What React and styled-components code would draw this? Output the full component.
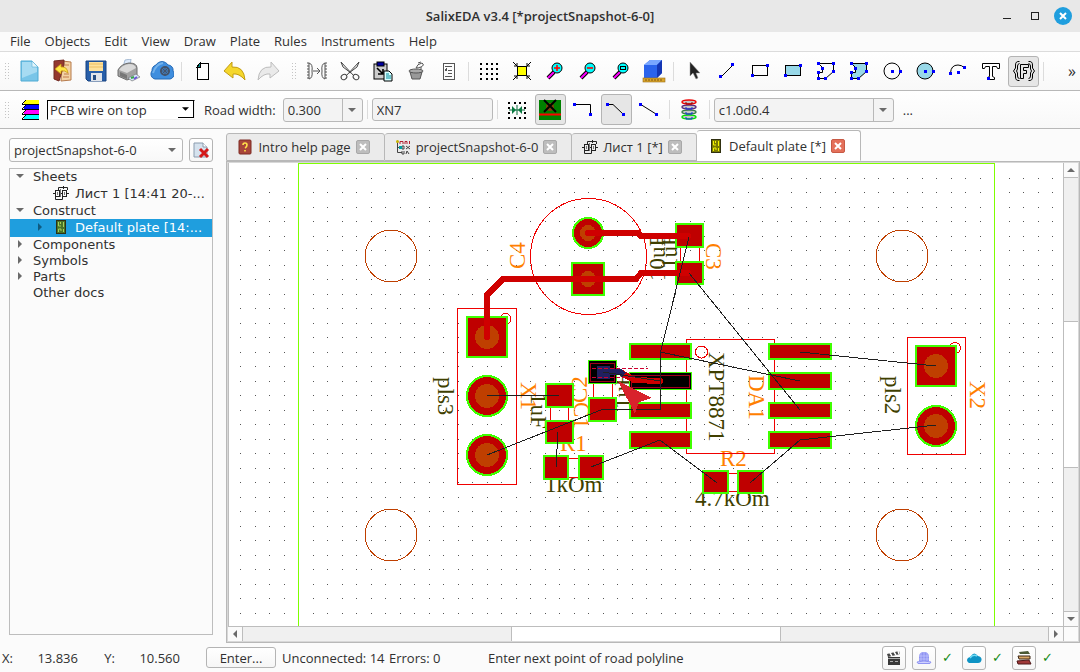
import React from "react";
import styled, { createGlobalStyle, css } from "styled-components";

const GlobalStyle = createGlobalStyle`
  * {
    box-sizing: border-box;
  }

  body {
    margin: 0;
    background: #fafafa;
  }

  body, button, input, select {
    font-family: "Open Sans", "Noto Sans", sans-serif;
    font-size: 13px;
    color: #303030;
  }
`;

const Window = styled.div`
  display: flex;
  flex-direction: column;
  height: 100vh;
  background: #fbfbfb;
`;

const TitleBar = styled.header`
  display: grid;
  grid-template-columns: 1fr auto 1fr;
  align-items: center;
  flex: none;
  height: 32px;
  padding: 0 8px;
  background: #e8e8e8;
`;

const Title = styled.h1`
  grid-column: 2;
  margin: 0;
  font-size: 13px;
  font-weight: 600;
`;

const WindowButtons = styled.div`
  display: flex;
  justify-content: flex-end;
  gap: 10px;
`;

const PlainButton = styled.button`
  display: flex;
  align-items: center;
  justify-content: center;
  padding: 0;
  border: none;
  background: none;
`;

const MenuBar = styled.nav`
  display: flex;
  flex: none;
  height: 20px;
  padding: 0 3px;
  border-bottom: 1px solid #dcdcdc;
`;

const MenuItem = styled.button`
  padding: 0 7px 1px;
  border: none;
  background: none;
  line-height: 18px;
`;

const ToolBar = styled.div`
  display: flex;
  align-items: center;
  gap: ${props => props.$gap}px;
  flex: none;
  height: ${props => props.$height}px;
  border-bottom: 1px solid #b8b8b8;
  background: linear-gradient(#ffffff, #f8f8f8);
`;

const ToolGroup = styled.div`
  display: flex;
  align-items: center;
  gap: 2px;
`;

const Handle = styled.span`
  width: 12px;
  height: 18px;
  background: radial-gradient(circle, #c4c4c4 1px, transparent 1px) 4px 0 / 3px 3px repeat-y,
    radial-gradient(circle, #c4c4c4 1px, transparent 1px) 7px 0 / 3px 3px repeat-y;
`;

const Separator = styled.span`
  width: 5px;
  height: 19px;
  background: linear-gradient(#dcdcdc, #dcdcdc) center / 1px 100% no-repeat;
`;

const ToolButton = styled.button`
  display: flex;
  align-items: center;
  justify-content: center;
  width: 31px;
  height: 31px;
  padding: 0;
  border: 1px solid transparent;
  border-radius: 3px;
  background: none;

  ${props =>
    props.$pressed &&
    css`
      border-color: #b4b4b4;
      background: #e6e6e6;
    `}
`;

const Icon = styled.svg`
  display: block;
  flex: none;
  width: ${props => props.$size || 24}px;
  height: ${props => props.$size || 24}px;
`;

const More = styled(PlainButton)`
  margin-left: auto;
  padding-right: 4px;
  font-size: 16px;
  line-height: 16px;
`;

const LayerIcon = styled.span`
  margin: 0 4px 0 7px;
`;

const ComboBox = styled.span`
  display: inline-grid;
  grid-template-columns: 1fr 20px;
  flex: ${props => (props.$grow ? "1" : "none")};
  width: ${props => props.$width}px;
  height: 24px;
  border: 1px solid #b8b8b8;
  border-radius: 3px;
  background: ${props => (props.$flat ? "linear-gradient(#ffffff, #f8f8f8)" : "#f3f3f3")};

  svg {
    grid-area: 1 / 2;
    align-self: center;
    justify-self: center;
    pointer-events: none;
  }
`;

const ComboSelect = styled.select`
  grid-area: 1 / 1 / 2 / 3;
  appearance: none;
  width: 100%;
  padding: 0 4px;
  border: none;
  background: ${props =>
    props.$flat ? "none" : "linear-gradient(#b8b8b8, #b8b8b8) right 19px top / 1px 100% no-repeat"};
`;

const SunkenCombo = styled(ComboBox)`
  grid-template-columns: 1fr 16px;
  height: 20px;
  border: 1px solid #f0f0f0;
  border-top-color: #000;
  border-left-color: #000;
  border-radius: 0;
  background: #fff;

  svg {
    width: 16px;
    height: 17px;
    border-right: 1px solid #000;
    border-bottom: 1px solid #000;
    align-self: start;
    padding: 4px;
  }

  select {
    padding: 0 2px;
    background: none;
  }
`;

const Label = styled.label`
  margin: 0 5px 0 7px;
`;

const TextInput = styled.input`
  width: 121px;
  height: 23px;
  padding: 0 4px;
  border: 1px solid #b8b8b8;
  border-radius: 3px;
  background: #f3f3f3;
`;

const Main = styled.div`
  display: flex;
  flex: 1;
  min-height: 0;
`;

const Sidebar = styled.aside`
  display: flex;
  flex-direction: column;
  gap: 6px;
  width: 226px;
  padding: 9px 13px 8px 9px;
`;

const SidebarTop = styled.div`
  display: flex;
  gap: 6px;
`;

const FramedButton = styled.button`
  display: flex;
  align-items: center;
  justify-content: center;
  width: ${props => props.$width || 24}px;
  height: ${props => props.$height || 24}px;
  padding: 0;
  border: 1px solid #b4b4b4;
  border-radius: 3px;
  background: linear-gradient(#ffffff, #f6f6f6);
`;

const Tree = styled.ul`
  flex: 1;
  margin: 0;
  padding: 0;
  border: 1px solid #bdbdbd;
  list-style: none;
  font-family: "DejaVu Sans", sans-serif;
`;

const TreeRow = styled.li`
  display: flex;
  align-items: center;
  height: ${props => (props.$level ? 18 : 16)}px;
  padding-bottom: 2px;
  padding-left: ${props => (props.$level ? 23 : 3)}px;
  color: ${props => (props.$selected ? "#fff" : "#303030")};
  background: ${props => (props.$selected ? "#1f9ede" : "none")};
  white-space: nowrap;
`;

const Expander = styled.span`
  display: flex;
  justify-content: center;
  width: 14px;
  margin-right: 6px;
`;

const TreeIcon = styled.span`
  margin-right: 6px;
`;

const Workspace = styled.main`
  display: flex;
  flex-direction: column;
  flex: 1;
  min-width: 0;
`;

const Tabs = styled.div`
  display: flex;
  align-items: flex-end;
  height: 32px;
`;

const Tab = styled.div`
  display: flex;
  align-items: center;
  justify-content: center;
  gap: 5px;
  width: ${props => props.$width}px;
  height: ${props => (props.$active ? 31 : 28)}px;
  padding-right: 4px;
  border: 1px solid #b8b8b8;
  border-left-width: ${props => (props.$first ? 1 : 0)}px;
  border-bottom-color: ${props => (props.$active ? "#fff" : "#b8b8b8")};
  border-radius: 3px 3px 0 0;
  background: ${props => (props.$active ? "#fff" : "#ebebeb")};
  white-space: nowrap;
`;

const CloseTab = styled.button`
  display: flex;
  align-items: center;
  justify-content: center;
  width: 14px;
  height: 14px;
  padding: 0;
  border: 1px solid ${props => (props.$active ? "#c85a45" : "#a8a8a8")};
  border-radius: 2px;
  background: ${props => (props.$active ? "#e4705a" : "#bdbdbd")};
`;

const ViewFrame = styled.div`
  display: grid;
  grid-template-columns: 1fr 15px;
  grid-template-rows: 1fr 15px;
  flex: 1;
  min-height: 0;
  border: 1px solid #b8b8b8;
  outline: 1px solid #d8d8d8;
  outline-offset: -2px;
  padding: 1px;
`;

const Canvas = styled.svg`
  display: block;
  width: 100%;
  height: 100%;
  min-height: 0;
  border-left: 1px solid #bdbdbd;
  background: #fff;
`;

const ScrollBar = styled.div`
  display: flex;
  flex-direction: ${props => (props.$vertical ? "column" : "row")};
  border: 0 solid #bdbdbd;
  border-width: ${props => (props.$vertical ? "0 0 0 1px" : "1px 0 0 0")};
  background: #f0f0f0;
`;

const ScrollButton = styled(PlainButton)`
  flex: none;
  width: ${props => (props.$vertical ? "auto" : "14px")};
  height: ${props => (props.$vertical ? "14px" : "auto")};
  background: #fafafa;
`;

const Track = styled.div`
  flex: ${props => props.$grow};
  background: ${props => (props.$thumb ? "#fff" : "#f0f0f0")};
  border: 0 solid #bdbdbd;
  border-width: ${props => (props.$thumb ? "0" : props.$vertical ? "1px 0" : "0 1px")};
`;

const Corner = styled.div`
  border: 0 solid #bdbdbd;
  border-width: 1px 0 0 1px;
`;

const StatusBar = styled.footer`
  display: flex;
  align-items: center;
  flex: none;
  height: 29px;
  padding: 0 24px 0 2px;
  white-space: nowrap;
`;

const StatusText = styled.span`
  width: ${props => props.$width}px;
  text-align: ${props => props.$align || "left"};
`;

const StatusTools = styled.div`
  display: flex;
  align-items: center;
  gap: 6px;
  margin-left: auto;
`;

const Check = styled.span`
  width: 14px;
  color: #168a16;
  font-family: "DejaVu Sans", sans-serif;
  font-size: 13px;
`;

const Arrow = ({ dir = "down", color = "#6a6a6a", size = 8 }) => {
  const points = {
    down: "0,2 8,2 4,6",
    up: "0,6 8,6 4,2",
    left: "6,0 6,8 2,4",
    right: "2,0 2,8 6,4"
  };
  return (
    <Icon $size={size} viewBox="0 0 8 8">
      <polygon points={points[dir]} fill={color} />
    </Icon>
  );
};

const dot = (x, y, color = "#0000ff") => (
  <rect key={`${x}-${y}`} x={x} y={y} width="3" height="3" fill={color} />
);

const grid = (
  <g fill="#000">
    {[3, 9, 14, 19].map(x => [4, 9, 14, 19].map(y => <rect key={`${x}${y}`} x={x} y={y} width="2" height="2" />))}
  </g>
);

const lens = sign => (
  <g>
    <path d="M5 19L11 13" stroke="#000" strokeWidth="4" />
    <path d="M5 19L11 13" stroke="#ff00ff" strokeWidth="2" />
    <circle cx="14" cy="9" r="5" fill="#00ffff" stroke="#000" />
    {sign}
  </g>
);

const sheetIcon = (
  <g fill="none" stroke="#222">
    <path d="M0 8.500H3M7 8.500H10M14 8.500H16M5.500 5V2.500H14.500V5M2.500 12V14.500H9.500V12M10.500 1V4" />
    <rect x="2.500" y="5.500" width="4" height="6" />
    <rect x="9.500" y="5.500" width="4" height="6" />
    <path d="M4.500 7V10M11.500 7V10M7.500 4V12" stroke="#777" />
  </g>
);

const plateIcon = (base, line) => (
  <g>
    <rect x="3.500" y="1.500" width="9" height="13" fill={base} stroke="#303010" />
    <path d="M5.500 3V7H8M10.500 3V8M5.500 13V10H8V12M10.500 10V13M7.500 3V5" fill="none" stroke={line} />
  </g>
);

const polyPath = "M4.500 4.500H19.500V12.500L11.500 19.500H4.500V13.500H8.500V8.500Z";
const polyDots = [[3, 3], [18, 3], [18, 11], [10, 18], [3, 18], [3, 12], [7, 8]];

const icons = {
  newFile: (
    <g>
      <path d="M3 2H14L20 8V22H3Z" fill="#79c5e8" stroke="#4faad3" />
      <path d="M4 3H13L19 9V13L4 19Z" fill="#a7dbf2" />
      <path d="M14 2V8H20Z" fill="#e3f5fc" stroke="#5cb2d8" strokeWidth=".6" />
    </g>
  ),
  exit: (
    <g>
      <path d="M11 2L20 3V21L10 22Z" fill="#f3d3a4" stroke="#b67a4d" />
      <path d="M3 2L13 1V6L8 22L3 20Z" fill="#94382f" stroke="#712a22" />
      <path d="M13 15H18M12 18H18M14 6H18" stroke="#c27c4c" />
      <path d="M4 10L10 5V8Q16 7 17 14Q14 11 10 12V15Z" fill="#ffe646" stroke="#c99912" strokeWidth=".8" />
    </g>
  ),
  save: (
    <g>
      <path d="M2 2H22V22H4L2 20Z" fill="#285fa9" stroke="#174280" />
      <rect x="5" y="3" width="14" height="9" fill="#ffe29c" />
      <path d="M5 5H19M5 8H19" stroke="#eebf62" />
      <rect x="7" y="14" width="11" height="8" fill="#e0e4ea" />
      <rect x="9" y="16" width="3" height="5" fill="#254d83" />
    </g>
  ),
  print: (
    <g>
      <path d="M6 8L8 1L14 0L13 8Z" fill="#dce9fa" stroke="#88a3c3" strokeWidth=".7" />
      <path d="M1 11Q4 5 12 4Q20 4 20 9V17L10 21L1 17Z" fill="#a2a2a2" stroke="#6c6c6c" />
      <path d="M2 11Q5 6 12 5Q18 5 19 9L10 14Z" fill="#d9d9d9" />
      <path d="M3 13L10 16V20L3 17Z" fill="#777" />
      <path d="M11 19L19 15L23 18L15 22Z" fill="#d6e5f7" stroke="#777" strokeWidth=".7" />
      <path d="M14 19L17 18" stroke="#36a548" strokeWidth="2" />
      <path d="M17 20L20 18" stroke="#6c55db" strokeWidth="2" />
    </g>
  ),
  cloud: (
    <g>
      <path d="M5 20A5 5 0 0 1 2 12A6 6 0 0 1 6 6A7 7 0 0 1 18 6A5 5 0 0 1 23 12A5 5 0 0 1 20 20Z" fill="#3f8ede" stroke="#256ab6" />
      <path d="M3 14Q6 5 13 4" fill="none" stroke="#73b2ec" strokeWidth="2" />
      <circle cx="15" cy="12" r="4" fill="none" stroke="#43536b" strokeWidth="2" />
      <path d="M15 7V17M10 12H20M12 9L18 15M18 9L12 15" stroke="#43536b" strokeWidth="1" />
    </g>
  ),
  page: (
    <g fill="none" stroke="#000" shapeRendering="crispEdges">
      <path d="M10 4H18V20H7V7Z" fill="#fff" />
      <path d="M7 8H10V4Z" fill="#008080" />
    </g>
  ),
  undo: (
    <path d="M1 12L9 3V8Q21 7 22 21Q16 14 10 15V19Z" fill="#f5d72c" stroke="#c39d14" />
  ),
  redo: (
    <path d="M23 12L15 3V8Q3 7 2 21Q8 14 14 15V19Z" fill="#eaeaea" stroke="#bdbdbd" />
  ),
  mirror: (
    <g fill="none" stroke="#555">
      <path d="M4 4Q8 5 7 12Q8 19 4 20ZM20 4Q16 5 17 12Q16 19 20 20ZM8 12H15M12 9L15 12L12 15" />
      <path d="M3 3V21M21 3V21" strokeDasharray="2 1" />
    </g>
  ),
  cut: (
    <g fill="none" stroke="#444">
      <path d="M3 3L16 17M21 3L8 17M3 3L5 8L13 14M21 3L19 8L11 14" />
      <ellipse cx="6" cy="18" rx="3" ry="2.500" transform="rotate(-35 6 18)" />
      <ellipse cx="18" cy="18" rx="3" ry="2.500" transform="rotate(35 18 18)" />
    </g>
  ),
  paste: (
    <g stroke="#000">
      <rect x="3" y="5" width="13" height="15" fill="#ccc" />
      <rect x="6" y="3" width="7" height="4" fill="#0000a0" />
      <path d="M6 9L12 15M12 10V15H7" fill="none" strokeWidth="1.600" />
      <path d="M13 12H18L21 15V22H13Z" fill="#d8ffff" />
      <path d="M15 15H18M15 17H20M15 19H20" stroke="#008c9c" />
    </g>
  ),
  bin: (
    <g stroke="#555" fill="#999">
      <path d="M6 13H18L16 20H8Z" />
      <ellipse cx="12" cy="12" rx="7" ry="2" fill="#aaa" />
      <path d="M12 9Q13 5 18 4Q21 6 17 8Q14 9 12 9M14 4L17 3M17 8V10" fill="none" />
    </g>
  ),
  list: (
    <g fill="none" stroke="#555" shapeRendering="crispEdges">
      <rect x="6" y="4" width="11" height="16" />
      <path d="M8 7H15M11 11H15M11 14H15M8 17H15M8 10L9 12L10 9" />
    </g>
  ),
  grid,
  fit: (
    <g stroke="#000" fill="none">
      <rect x="7.500" y="7.500" width="9" height="9" fill="#ffff00" />
      <path d="M3 3L7 7M7 4V7H4M21 3L17 7M17 4V7H20M3 21L7 17M4 17H7V20M21 21L17 17M20 17H17V20" />
    </g>
  ),
  zoomIn: lens(<path d="M11 9H17M14 6V12" stroke="#f00" strokeWidth="1.600" />),
  zoomOut: lens(<path d="M11 9H17" stroke="#f00" strokeWidth="1.600" />),
  zoomWindow: lens(<rect x="11.500" y="7.500" width="5" height="3" fill="none" stroke="#000" />),
  cube: (
    <g>
      <path d="M2 6L8 1H20V14L15 19H2Z" fill="#2a63ec" />
      <path d="M2 6L8 1H20L15 6Z" fill="#78a6ff" />
      <path d="M15 6L20 1V14L15 19Z" fill="#1436b4" />
      <rect x="1" y="19" width="22" height="4" fill="#d9a52b" stroke="#9a6b14" strokeWidth=".6" />
      <path d="M4 20V22M7 20V22M10 20V22M13 20V22M16 20V22M19 20V22" stroke="#805712" />
    </g>
  ),
  pointer: <path d="M8 3V17L11 14L14 20L16 19L14 14H18Z" fill="#222" stroke="#999" strokeWidth=".5" />,
  line: <g><path d="M6 18L18 6" stroke="#000" />{dot(4, 16)}{dot(16, 4)}</g>,
  rect: <g><rect x="4.500" y="6.500" width="15" height="10" fill="none" stroke="#000" />{dot(3, 15)}{dot(18, 5)}</g>,
  rectFill: <g><rect x="4.500" y="6.500" width="15" height="10" fill="#98d8e8" stroke="#000" />{dot(3, 15)}{dot(18, 5)}</g>,
  poly: <g><path d={polyPath} fill="none" stroke="#000" />{polyDots.map(([x, y]) => dot(x, y))}</g>,
  polyFill: <g><path d={polyPath} fill="#98d8e8" stroke="#000" />{polyDots.map(([x, y]) => dot(x, y))}</g>,
  circle: <g><circle cx="12" cy="12" r="8" fill="none" stroke="#000" />{dot(11, 11)}{dot(19, 11)}</g>,
  circleFill: <g><circle cx="12" cy="12" r="8" fill="#98d8e8" stroke="#000" />{dot(11, 11)}{dot(19, 11)}</g>,
  arc: <g><path d="M4.500 14Q5 6 12 6Q16 6 18.500 9" fill="none" stroke="#000" />{dot(3, 13)}{dot(11, 12)}{dot(17, 7)}</g>,
  text: (
    <g>
      <path d="M3.500 4.500H20.500V9.500H18.500L17.500 7.500H13.500V17.500L15.500 18.500V20.500H8.500V18.500L10.500 17.500V7.500H6.500L5.500 9.500H3.500Z" fill="#fff" stroke="#000" />
      {dot(8, 18)}
    </g>
  ),
  format: (
    <g fill="none" stroke="#000">
      <path d="M7.500 2.500Q3.500 2 3.500 6V9L1.500 12L3.500 15V18Q3.500 22 7.500 21.500M7.500 4.500Q5.500 5 5.500 7V10L4.500 12L5.500 14V17Q5.500 19.500 7.500 19.500M16.500 2.500Q20.500 2 20.500 6V9L22.500 12L20.500 15V18Q20.500 22 16.500 21.500M16.500 4.500Q18.500 5 18.500 7V10L19.500 12L18.500 14V17Q18.500 19.500 16.500 19.500" />
      <path d="M8.500 5.500H16.500V8.500H11.500V11.500H14.500V14.500H11.500V19.500H8.500Z" />
    </g>
  ),
  layers: (
    <g shapeRendering="crispEdges">
      {["#ffff00", "#0000ff", "#ff00ff", "#00ffff"].map((color, i) => (
        <g key={color}>
          <path d={`M1 ${3 + i * 5}L5 ${0 + i * 5}H18V${4 + i * 5}H4Z`} fill={color} />
          <path d={`M1 ${4 + i * 5}H18M1 ${4 + i * 5}L5 ${0 + i * 5}`} stroke="#000" />
        </g>
      ))}
    </g>
  ),
  snap: (
    <g>
      {[[3, 4], [9, 4], [14, 4], [19, 4], [3, 9], [19, 9], [3, 14], [19, 14], [3, 19], [9, 19], [14, 19], [19, 19]].map(
        ([x, y]) => <rect key={`${x}-${y}`} x={x} y={y} width="2" height="2" />
      )}
      <path d="M4 12H20M12 7V17" stroke="#0a6a3a" />
      <path d="M7 8L11 12L7 16ZM17 8L13 12L17 16Z" fill="#087a40" />
    </g>
  ),
  clear: (
    <g>
      <rect x="1" y="2" width="22" height="20" fill="#008000" />
      <path d="M1 16.500H23" stroke="#f00" strokeWidth="2" />
      <circle cx="12" cy="9" r="4" fill="#80400a" />
      <path d="M6 2L18 14M18 2L6 14" stroke="#000" strokeWidth="2" />
    </g>
  ),
  corner: <g><path d="M4 6.500H19.500V16" fill="none" stroke="#000" />{dot(2, 5)}{dot(18, 15)}</g>,
  bevel: <g><path d="M4 6.500H9L19 16" fill="none" stroke="#000" />{dot(2, 5)}{dot(18, 15)}</g>,
  straight: <g><path d="M3 6L19 16" stroke="#000" />{dot(2, 5)}{dot(18, 15)}</g>,
  stack: (
    <g fill="#c6c6c6">
      {[["#00e000", 19], ["#3a7a4a", 14], ["#5a2a80", 9], ["#f00000", 4]].map(([color, y]) => (
        <g key={color}>
          <ellipse cx="12" cy={y} rx="7" ry="2" stroke={color} strokeWidth="1.400" />
          <path d={`M9 ${y}V${y + 2}H15V${y}`} fill="none" stroke={y === 4 ? "#900" : "#1030e0"} />
        </g>
      ))}
    </g>
  )
};

const ToolIcon = ({ name }) => (
  <Icon viewBox="0 0 24 24">{icons[name]}</Icon>
);

const fileTools = ["newFile", "exit", "save", "print", "cloud", "|", "page", "undo", "redo"];
const editTools = [
  "mirror", "cut", "paste", "bin", "list", "|",
  "grid", "fit", "zoomIn", "zoomOut", "zoomWindow", "cube", "|",
  "pointer", "line", "rect", "rectFill", "poly", "polyFill", "circle", "circleFill", "arc", "text", "format", "|"
];
const roadTools = ["|", "snap", "clear", "corner", "bevel", "straight", "|", "stack", "|"];
const pressed = ["format", "clear", "bevel"];

const Tools = ({ items }) =>
  items.map((name, i) =>
    name === "|" ? (
      <Separator key={i} />
    ) : (
      <ToolButton key={name} aria-label={name} $pressed={pressed.includes(name)}>
        <ToolIcon name={name} />
      </ToolButton>
    )
  );

const Combo = ({ id, label, value, width, flat, grow }) => (
  <ComboBox $width={width} $flat={flat} $grow={grow}>
    <ComboSelect id={id} aria-label={label} $flat={flat} defaultValue={value}>
      <option>{value}</option>
    </ComboSelect>
    <Arrow />
  </ComboBox>
);

const treeRows = [
  { text: "Sheets", open: true },
  { text: "Лист 1 [14:41 20-...", level: 1, icon: sheetIcon, leaf: true },
  { text: "Construct", open: true },
  { text: "Default plate [14:...", level: 1, icon: plateIcon("#48742a", "#a8cf58"), selected: true },
  { text: "Components" },
  { text: "Symbols" },
  { text: "Parts" },
  { text: "Other docs", leaf: true }
];

const tabs = [
  {
    text: "Intro help page",
    width: 159,
    icon: (
      <g>
        <rect x="2" y="1" width="12" height="14" rx="1" fill="#a8453a" stroke="#7c2a22" />
        <path d="M6 6Q6 4 8 4T10 6T8 9M8 11V12.500" fill="none" stroke="#ffe14a" strokeWidth="1.600" />
      </g>
    )
  },
  {
    text: "projectSnapshot-6-0",
    width: 187,
    icon: (
      <g fill="none" stroke="#444">
        <path d="M2.500 3V13.500H7M2.500 8.500H7" />
        <circle cx="2.500" cy="2.500" r="1.500" fill="#c8b400" stroke="none" />
        <path d="M5 5V2.500H8V5M10 5V2.500H12V5M14.500 2V5" stroke="#b02030" />
        <path d="M7 7H9V10H7ZM11 7L15 10M15 7L11 10M7 12V15H9V12M11 15L12 12L14 15" />
        <rect x="4" y="7" width="3" height="3" fill="#00a0a0" stroke="none" />
      </g>
    )
  },
  { text: "Лист 1 [*]", width: 125, icon: sheetIcon },
  { text: "Default plate [*]", width: 164, icon: plateIcon("#7b7b00", "#f5f500"), active: true }
];

const gridX = Array.from({ length: 57 }, (_, i) => 240 + Math.round(14.5 * i));
const gridY = Array.from({ length: 31 }, (_, i) => 178 + Math.floor(14.5 * i));

// x, y, width, height
const smdPads = [
  [675, 223, 29, 25], [675, 261, 29, 24],
  [545, 383, 29, 25], [545, 420, 29, 24],
  [543, 455, 26, 25], [578, 455, 26, 25],
  [588, 397, 29, 25],
  [629, 343, 63, 17], [629, 402, 63, 17], [629, 431, 63, 18],
  [768, 343, 64, 17], [768, 372, 64, 18], [768, 402, 64, 17], [768, 431, 64, 18],
  [702, 470, 27, 24], [737, 470, 27, 24]
];

const activePads = [[588, 360, 29, 24], [629, 372, 63, 18]];

const squarePads = [[588, 279, 34, 8], [487, 337, 42, 12], [936, 366, 42, 12]];
const roundPads = [[588, 233, 16, 8], [487, 396, 21, 12], [487, 455, 21, 12], [936, 426, 21, 12]];

// text, x, y, angle, is designator
const marks = [
  ["C4", 525, 269, -90, true],
  ["C3", 706, 243, 90, true],
  ["10uF", 665, 281, -90],
  ["1uF", 677, 269, -90],
  ["pls3", 438, 377, 90],
  ["X1", 521, 382, 90, true],
  ["C2", 587, 403, -90, true],
  ["C1", 574, 402, 90, true],
  ["1uF", 531, 393, 90],
  ["1uF", 630, 409, -90],
  ["R1", 560, 451, 0, true],
  ["1kOm", 545, 492, 0],
  ["XPT8871", 709, 352, 90],
  ["DA1", 749, 375, 90, true],
  ["R2", 720, 466, 0, true],
  ["4.7kOm", 695, 506, 0],
  ["pls2", 885, 376, 90],
  ["X2", 970, 381, 90, true]
];

const MarkText = styled.text`
  font-family: "Liberation Serif", serif;
  font-size: 23px;
  fill: ${props => (props.$ref ? "#ff7f00" : "#3f3f00")};
`;

const Board = () => (
  <Canvas role="img" aria-label="Default plate">
    <g transform="translate(-229 -163)" shapeRendering="crispEdges">
      <g fill="#555">
        {gridY.map(y => gridX.map(x => <rect key={`${x}-${y}`} x={x} y={y} width="1" height="1" />))}
      </g>
      <path d="M298.500 628V163.500H994.500V628" fill="none" stroke="#7fff00" />
      <g fill="none" stroke="#bf3f00">
        {[[391, 256], [902, 256], [391, 535], [902, 535]].map(([x, y]) => (
          <circle key={`${x}-${y}`} cx={x} cy={y} r="26" />
        ))}
      </g>

      {marks.map(([text, x, y, angle, ref], i) => (
        <MarkText key={i} $ref={ref} transform={`translate(${x} ${y}) rotate(${angle})`}>
          {text}
        </MarkText>
      ))}

      <g fill="none" stroke="#f00000">
        <circle cx="588.500" cy="256.500" r="58" />
        <rect x="457.500" y="308.500" width="59" height="176" />
        <rect x="686.500" y="339.500" width="88" height="114" />
        <rect x="907.500" y="337.500" width="58" height="117" />
        <circle cx="505.500" cy="319" r="5.500" />
        <circle cx="955" cy="348" r="5.500" />
        <circle cx="701.500" cy="352" r="6" />
        <path d="M680.500 248V261M699.500 248V261M550.500 407V420M568.500 407V420M593.500 384V397M612.500 384V397" />
        <path d="M569 458.500H578M569 477.500H578M729 473.500H737M729 491.500H737" />
      </g>

      {smdPads.map(([x, y, w, h]) => (
        <rect key={`${x}-${y}`} x={x + 1} y={y + 1} width={w - 2} height={h - 2} fill="#bf0000" stroke="#3fff00" strokeWidth="2" />
      ))}
      {activePads.map(([x, y, w, h]) => (
        <g key={x}>
          <rect x={x + 0.5} y={y + 0.5} width={w - 1} height={h - 1} fill="#000" stroke="#3fff00" />
          <rect x={x + 2.5} y={y + 3.5} width={w - 5} height={h - 6} fill="none" stroke="#a00018" />
        </g>
      ))}
      {squarePads.map(([x, y, size, hole]) => (
        <g key={x}>
          <rect x={x - size / 2 + 1} y={y - size / 2 + 1} width={size - 2} height={size - 2} fill="#bf0000" stroke="#3fff00" strokeWidth="2" />
          <circle cx={x} cy={y} r={hole} fill="#bf3f00" />
        </g>
      ))}
      {roundPads.map(([x, y, r, hole]) => (
        <g key={`${x}-${y}`}>
          <circle cx={x} cy={y} r={r - 1} fill="#bf0000" stroke="#3fff00" strokeWidth="2" />
          <circle cx={x} cy={y} r={hole} fill="#bf3f00" />
        </g>
      ))}

      <g fill="none" stroke="#cf0000" strokeWidth="6" strokeLinecap="round">
        <path d="M588 233H638L641 236H688M487 337V295L503 279H636L641 273H688" />
        <path d="M622 373L634 380L660 381" />
      </g>
      <rect x="597" y="366" width="13" height="13" fill="#201f5f" />
      <path d="M600 372H620L624 375" fill="none" stroke="#201f5f" strokeWidth="6" />
      <path d="M592 368.500H648M592 377.500H640" stroke="#d00030" strokeDasharray="4 2" />

      <g fill="none" stroke="#202020">
        <path d="M689 237L660.500 352V410M689 273L800 410M660 352L800 381M800 352L936 366M936 425L800 440L750 483" />
        <path d="M717 483L660 440L591 467M487 395.500H559M487 455L602 409.500H660M558 432L556 467M603 372L660 381" />
      </g>
      <path d="M618 381L652 398L639 402L635 414Z" fill="#d8222c" />
    </g>
  </Canvas>
);

const App = () => (
  <Window>
    <GlobalStyle />
    <TitleBar>
      <Title>SalixEDA v3.4 [*projectSnapshot-6-0]</Title>
      <WindowButtons>
        <PlainButton aria-label="Minimize">
          <Icon $size={18} viewBox="0 0 18 18"><path d="M5 11.500H13" stroke="#222" /></Icon>
        </PlainButton>
        <PlainButton aria-label="Maximize">
          <Icon $size={18} viewBox="0 0 18 18"><rect x="5.500" y="5.500" width="7" height="7" fill="none" stroke="#222" /></Icon>
        </PlainButton>
        <PlainButton aria-label="Close">
          <Icon $size={18} viewBox="0 0 18 18">
            <circle cx="9" cy="9" r="9" fill="#1f9ede" />
            <path d="M6 6L12 12M12 6L6 12" stroke="#fff" strokeWidth="2" />
          </Icon>
        </PlainButton>
      </WindowButtons>
    </TitleBar>

    <MenuBar>
      {["File", "Objects", "Edit", "View", "Draw", "Plate", "Rules", "Instruments", "Help"].map(item => (
        <MenuItem key={item}>{item}</MenuItem>
      ))}
    </MenuBar>

    <ToolBar $height={39} $gap={4}>
      <ToolGroup>
        <Handle />
        <Tools items={fileTools} />
      </ToolGroup>
      <ToolGroup>
        <Handle />
        <Tools items={editTools} />
      </ToolGroup>
      <More aria-label="More tools">»</More>
    </ToolBar>

    <ToolBar $height={38} $gap={2}>
      <Handle />
      <LayerIcon>
        <Icon $size={20} viewBox="0 0 20 20">{icons.layers}</Icon>
      </LayerIcon>
      <SunkenCombo $width={148}>
        <ComboSelect aria-label="Layer" defaultValue="PCB wire on top">
          <option>PCB wire on top</option>
        </ComboSelect>
        <Arrow color="#000" size={16} />
      </SunkenCombo>
      <Label htmlFor="road-width">Road width:</Label>
      <Combo id="road-width" value="0.300" width={80} />
      <Separator />
      <TextInput aria-label="Net name" defaultValue="XN7" />
      <Tools items={roadTools} />
      <Combo label="Via" value="c1.0d0.4" width={180} />
      <Label as="span">...</Label>
    </ToolBar>

    <Main>
      <Sidebar>
        <SidebarTop>
          <Combo label="Project" value="projectSnapshot-6-0" width={174} flat grow />
          <FramedButton aria-label="Close project">
            <Icon $size={18} viewBox="0 0 18 18">
              <path d="M2 2H11L15 6V16H2Z" fill="#d5e2ee" stroke="#8b9cae" />
              <path d="M11 2V6H15" fill="#fff" stroke="#8b9cae" />
              <path d="M8 8L16 16M16 8L8 16" stroke="#d31818" strokeWidth="3" />
            </Icon>
          </FramedButton>
        </SidebarTop>
        <Tree>
          {treeRows.map(row => (
            <TreeRow key={row.text} $level={row.level} $selected={row.selected}>
              <Expander>
                {!row.leaf && <Arrow dir={row.open ? "down" : "right"} color={row.selected ? "#0f5a80" : "#6a6a6a"} />}
              </Expander>
              {row.icon && (
                <TreeIcon>
                  <Icon $size={16} viewBox="0 0 16 16">{row.icon}</Icon>
                </TreeIcon>
              )}
              {row.text}
            </TreeRow>
          ))}
        </Tree>
      </Sidebar>

      <Workspace>
        <Tabs>
          {tabs.map((tab, i) => (
            <Tab key={tab.text} $width={tab.width} $active={tab.active} $first={i === 0}>
              <Icon $size={16} viewBox="0 0 16 16">{tab.icon}</Icon>
              {tab.text}
              <CloseTab aria-label={`Close ${tab.text}`} $active={tab.active}>
                <Icon $size={8} viewBox="0 0 8 8">
                  <path d="M1 1L7 7M7 1L1 7" stroke="#fff" strokeWidth="2" />
                </Icon>
              </CloseTab>
            </Tab>
          ))}
        </Tabs>
        <ViewFrame>
          <Board />
          <ScrollBar $vertical>
            <ScrollButton $vertical aria-label="Scroll up"><Arrow dir="up" /></ScrollButton>
            <Track $grow={145} $vertical />
            <Track $grow={146} $vertical $thumb />
            <Track $grow={145} $vertical />
            <ScrollButton $vertical aria-label="Scroll down"><Arrow /></ScrollButton>
          </ScrollBar>
          <ScrollBar>
            <ScrollButton aria-label="Scroll left"><Arrow dir="left" /></ScrollButton>
            <Track $grow={269} />
            <Track $grow={268} $thumb />
            <Track $grow={268} />
            <ScrollButton aria-label="Scroll right"><Arrow dir="right" /></ScrollButton>
          </ScrollBar>
          <Corner />
        </ViewFrame>
      </Workspace>
    </Main>

    <StatusBar>
      <StatusText $width={20}>X:</StatusText>
      <StatusText $width={56} $align="right">13.836</StatusText>
      <StatusText $width={37} $align="right">Y:</StatusText>
      <StatusText $width={65} $align="right">10.560</StatusText>
      <StatusText $width={26} />
      <FramedButton $width={70} $height={21}>Enter...</FramedButton>
      <StatusText $width={6} />
      <StatusText $width={107}>Unconnected: 14</StatusText>
      <StatusText $width={99}>Errors: 0</StatusText>
      <StatusText>Enter next point of road polyline</StatusText>
      <StatusTools>
        <FramedButton aria-label="Record">
          <Icon $size={16} viewBox="0 0 16 16">
            <path d="M1 4L13 1L14 4L2 7Z" fill="#444" />
            <path d="M4 3L6 6M8 2L10 5M12 1L13 4" stroke="#fff" strokeWidth="1.500" />
            <rect x="2" y="7" width="12" height="8" fill="#383838" />
            <path d="M2 8.500H14M4 11.500H7M9 11.500H12" stroke="#aaa" />
          </Icon>
        </FramedButton>
        <FramedButton aria-label="Server">
          <Icon $size={16} viewBox="0 0 16 16">
            <path d="M3 11V7Q3 2 8 2T13 7V11Z" fill="#8f94f2" />
            <path d="M5 3V11M8 2V11M11 3V11M3 6H13M3 9H13" stroke="#c5c8ff" strokeWidth=".7" />
            <path d="M1 12Q8 10 15 12L14 13.500H2Z" fill="#cfd1ff" stroke="#8f94f2" />
          </Icon>
        </FramedButton>
        <Check>✓</Check>
        <FramedButton aria-label="Cloud">
          <Icon $size={16} viewBox="0 0 16 16">
            <path d="M3 13A3 3 0 0 1 2 8Q4 7 5 6Q8 1 12 6Q16 7 15.500 10Q15 13 12 13Z" fill="#0e93c4" />
            <path d="M4 8Q7 4 11 6" fill="none" stroke="#70dcf5" strokeWidth="1.500" />
          </Icon>
        </FramedButton>
        <Check>✓</Check>
        <FramedButton aria-label="Library">
          <Icon $size={16} viewBox="0 0 16 16">
            <path d="M3 2L12 1L14 4H4Z" fill="#4b5a36" />
            <path d="M2 6H14V9H3Z" fill="#d9a765" stroke="#3b2615" />
            <path d="M1 11L13 10L15 14H2Z" fill="#a03838" stroke="#4d1717" />
          </Icon>
        </FramedButton>
        <Check>✓</Check>
      </StatusTools>
    </StatusBar>
  </Window>
);

export default App;
